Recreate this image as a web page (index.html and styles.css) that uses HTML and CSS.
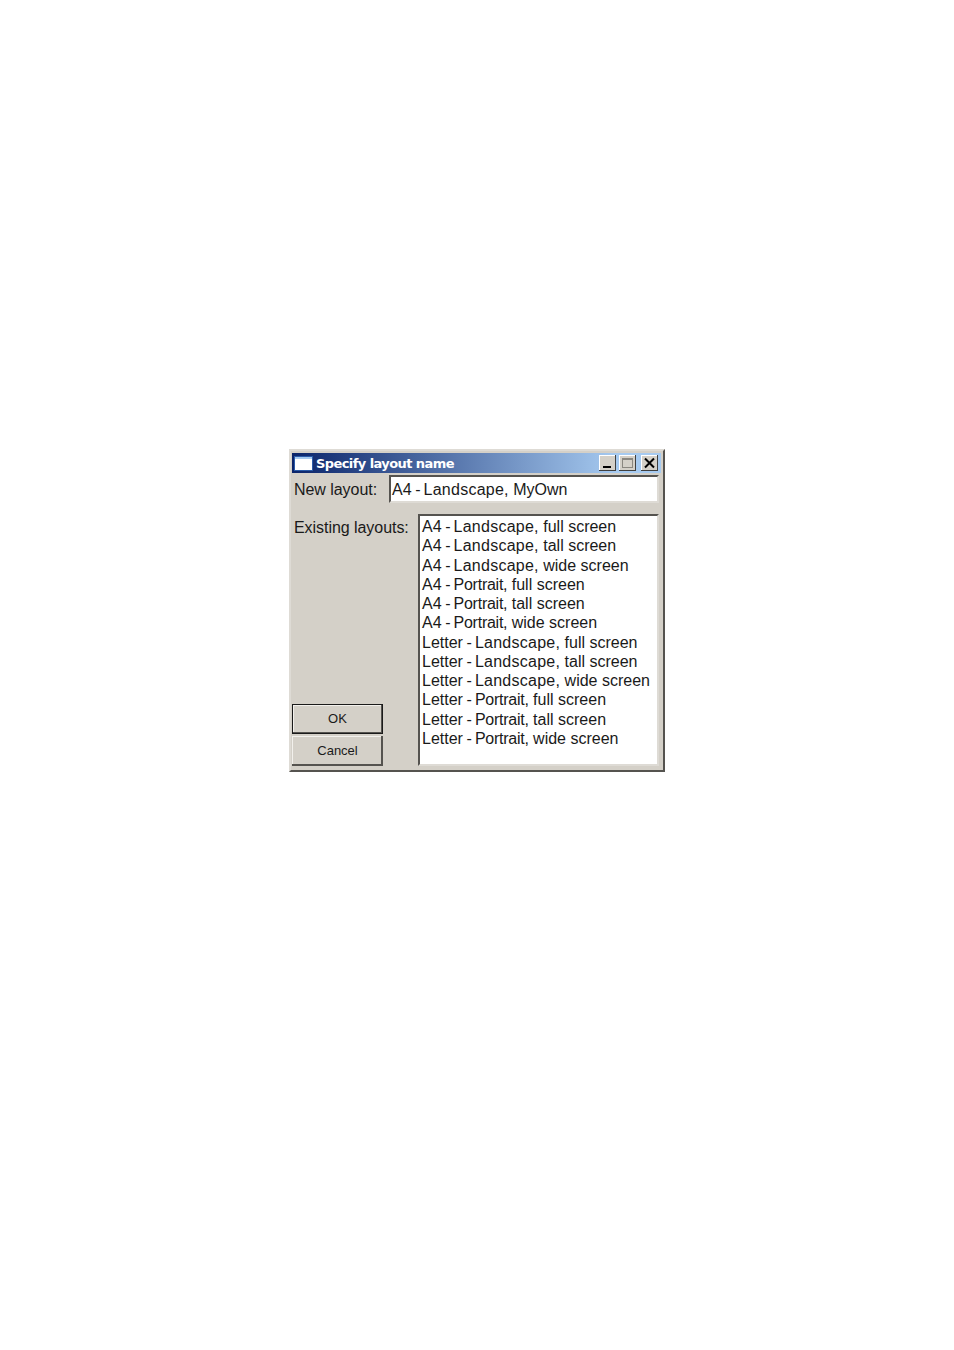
FILE: index.html
```html
<!DOCTYPE html>
<html lang="en">
<head>
<meta charset="utf-8">
<title>Specify layout name</title>
<link rel="stylesheet" href="styles.css">
</head>
<body>
<div class="window">
  <div class="titlebar">
    <svg class="appicon" width="19" height="15" viewBox="0 0 19 15"><rect width="19" height="15" fill="#2a5aa8"/><rect x="1" y="1" width="17" height="13" fill="#fff"/><rect x="1" y="1" width="17" height="2" fill="#a6caf0"/></svg>
    <span class="title">Specify layout name</span>
    <div class="controls">
      <span class="ctl"><svg width="17" height="16" viewBox="0 0 17 16"><rect x="4" y="11" width="8" height="2" fill="#000"/></svg></span>
      <span class="ctl ctl-max"><svg width="17" height="16" viewBox="0 0 17 16"><rect x="3.5" y="3.5" width="10" height="9" fill="none" stroke="#8a8780"/><rect x="3" y="3" width="11" height="2" fill="#8a8780"/></svg></span>
      <span class="ctl ctl-close"><svg width="17" height="16" viewBox="0 0 17 16"><path d="M4 3.5l9 9M13 3.5l-9 9" stroke="#000" stroke-width="2" fill="none"/></svg></span>
    </div>
  </div>
  <div class="row-new">
    <label class="lbl lbl-new">New layout:</label>
    <div class="field">A4<span class="dash"> - </span><span class="ls">Landscape,</span> MyOwn</div>
  </div>
  <div class="row-list">
    <div class="side">
      <label class="lbl lbl-existing">Existing layouts:</label>
      <div class="buttons">
        <button class="btn default">OK</button>
        <button class="btn">Cancel</button>
      </div>
    </div>
    <ul class="list">
      <li>A4<span class="dash"> - </span><span class="ls">Landscape,</span> full screen</li>
      <li>A4<span class="dash"> - </span><span class="ls">Landscape,</span> tall screen</li>
      <li>A4<span class="dash"> - </span><span class="ls">Landscape,</span> wide screen</li>
      <li>A4<span class="dash"> - </span><span class="pt">Portrait,</span> full screen</li>
      <li>A4<span class="dash"> - </span><span class="pt">Portrait,</span> tall screen</li>
      <li>A4<span class="dash"> - </span><span class="pt">Portrait,</span> wide screen</li>
      <li>Letter<span class="dash"> - </span><span class="ls">Landscape,</span> full screen</li>
      <li>Letter<span class="dash"> - </span><span class="ls">Landscape,</span> tall screen</li>
      <li>Letter<span class="dash"> - </span><span class="ls">Landscape,</span> wide screen</li>
      <li>Letter<span class="dash"> - </span><span class="pt">Portrait,</span> full screen</li>
      <li>Letter<span class="dash"> - </span><span class="pt">Portrait,</span> tall screen</li>
      <li>Letter<span class="dash"> - </span><span class="pt">Portrait,</span> wide screen</li>
    </ul>
  </div>
</div>
</body>
</html>
```

FILE: styles.css
```css
html, body { margin: 0; padding: 0; background: #fff; }
body {
  width: 954px;
  height: 1350px;
  padding: 449px 0 0 289px;
  box-sizing: border-box;
  font-family: "Liberation Sans", Arial, sans-serif;
  font-size: 16px;
  color: #1a1a1a;
  overflow: hidden;
}
.window {
  width: 376px;
  height: 323px;
  box-sizing: border-box;
  background: #d4d0c8;
  border: 2px solid;
  border-color: #dedbd5 #55534f #55534f #dedbd5;
  padding: 2px;
  display: flex;
  flex-direction: column;
}
.titlebar {
  height: 20px;
  flex: none;
  display: flex;
  align-items: center;
  margin-left: -1px;
  padding: 0 2px;
  background: linear-gradient(to right, #0a246a, #a6caf0 88%);
}
.appicon { flex: none; margin-right: 3px; }
.title {
  color: #fff;
  font-family: "DejaVu Sans", Verdana, sans-serif;
  font-size: 13px;
  font-weight: bold;
  letter-spacing: -0.58px;
}
.controls { margin-left: auto; display: flex; }
.ctl {
  width: 17px;
  height: 16px;
  background: #d4d0c8;
  box-shadow: inset -1px -1px 0 #404040, inset 1px 1px 0 #fff;
  display: block;
}
.ctl svg { display: block; }
.ctl-max { margin-left: 3px; }
.ctl-close { margin-left: 5px; margin-right: 1px; }
.row-new {
  display: flex;
  height: 28px;
  margin-top: 2px;
  flex: none;
}
.lbl { display: block; line-height: 19px; letter-spacing: -0.05px; }
.lbl-new { width: 96px; padding: 5px 0 0 1px; box-sizing: border-box; }
.field {
  width: 270px;
  box-sizing: border-box;
  background: #fff;
  border: 2px solid;
  border-color: #55534f #dedbd5 #dedbd5 #55534f;
  padding: 3px 0 0 1px;
  line-height: 19px;
}
.row-list {
  display: flex;
  margin-top: 11px;
  height: 252px;
  flex: none;
}
.side {
  width: 125px;
  display: flex;
  flex-direction: column;
  justify-content: space-between;
}
.lbl-existing { padding: 4px 0 0 1px; }
.buttons { display: flex; flex-direction: column; gap: 2px; width: 91px; margin-left: -1px; }
.btn {
  height: 30px;
  padding: 0 0 2px;
  background: #d4d0c8;
  border: 0;
  font-family: "Liberation Sans", Arial, sans-serif;
  font-size: 13px;
  color: #1a1a1a;
  box-shadow: inset -2px -2px 0 #55534f, inset 1px 1px 0 #f2f0ec;
}
.btn.default {
  box-shadow: inset 0 0 0 1px #1a1a1a, inset -2px -2px 0 #55534f, inset 2px 2px 0 #f2f0ec;
}
.list {
  list-style: none;
  margin: 0;
  width: 241px;
  box-sizing: border-box;
  background: #fff;
  border: 2px solid;
  border-color: #55534f #dedbd5 #dedbd5 #55534f;
  padding: 1px 0 0 2px;
}
.list li { height: 19.25px; line-height: 19.25px; white-space: nowrap; }
.dash { letter-spacing: -0.75px; }
.ls { letter-spacing: 0.25px; }
.pt { letter-spacing: -0.25px; }
```
